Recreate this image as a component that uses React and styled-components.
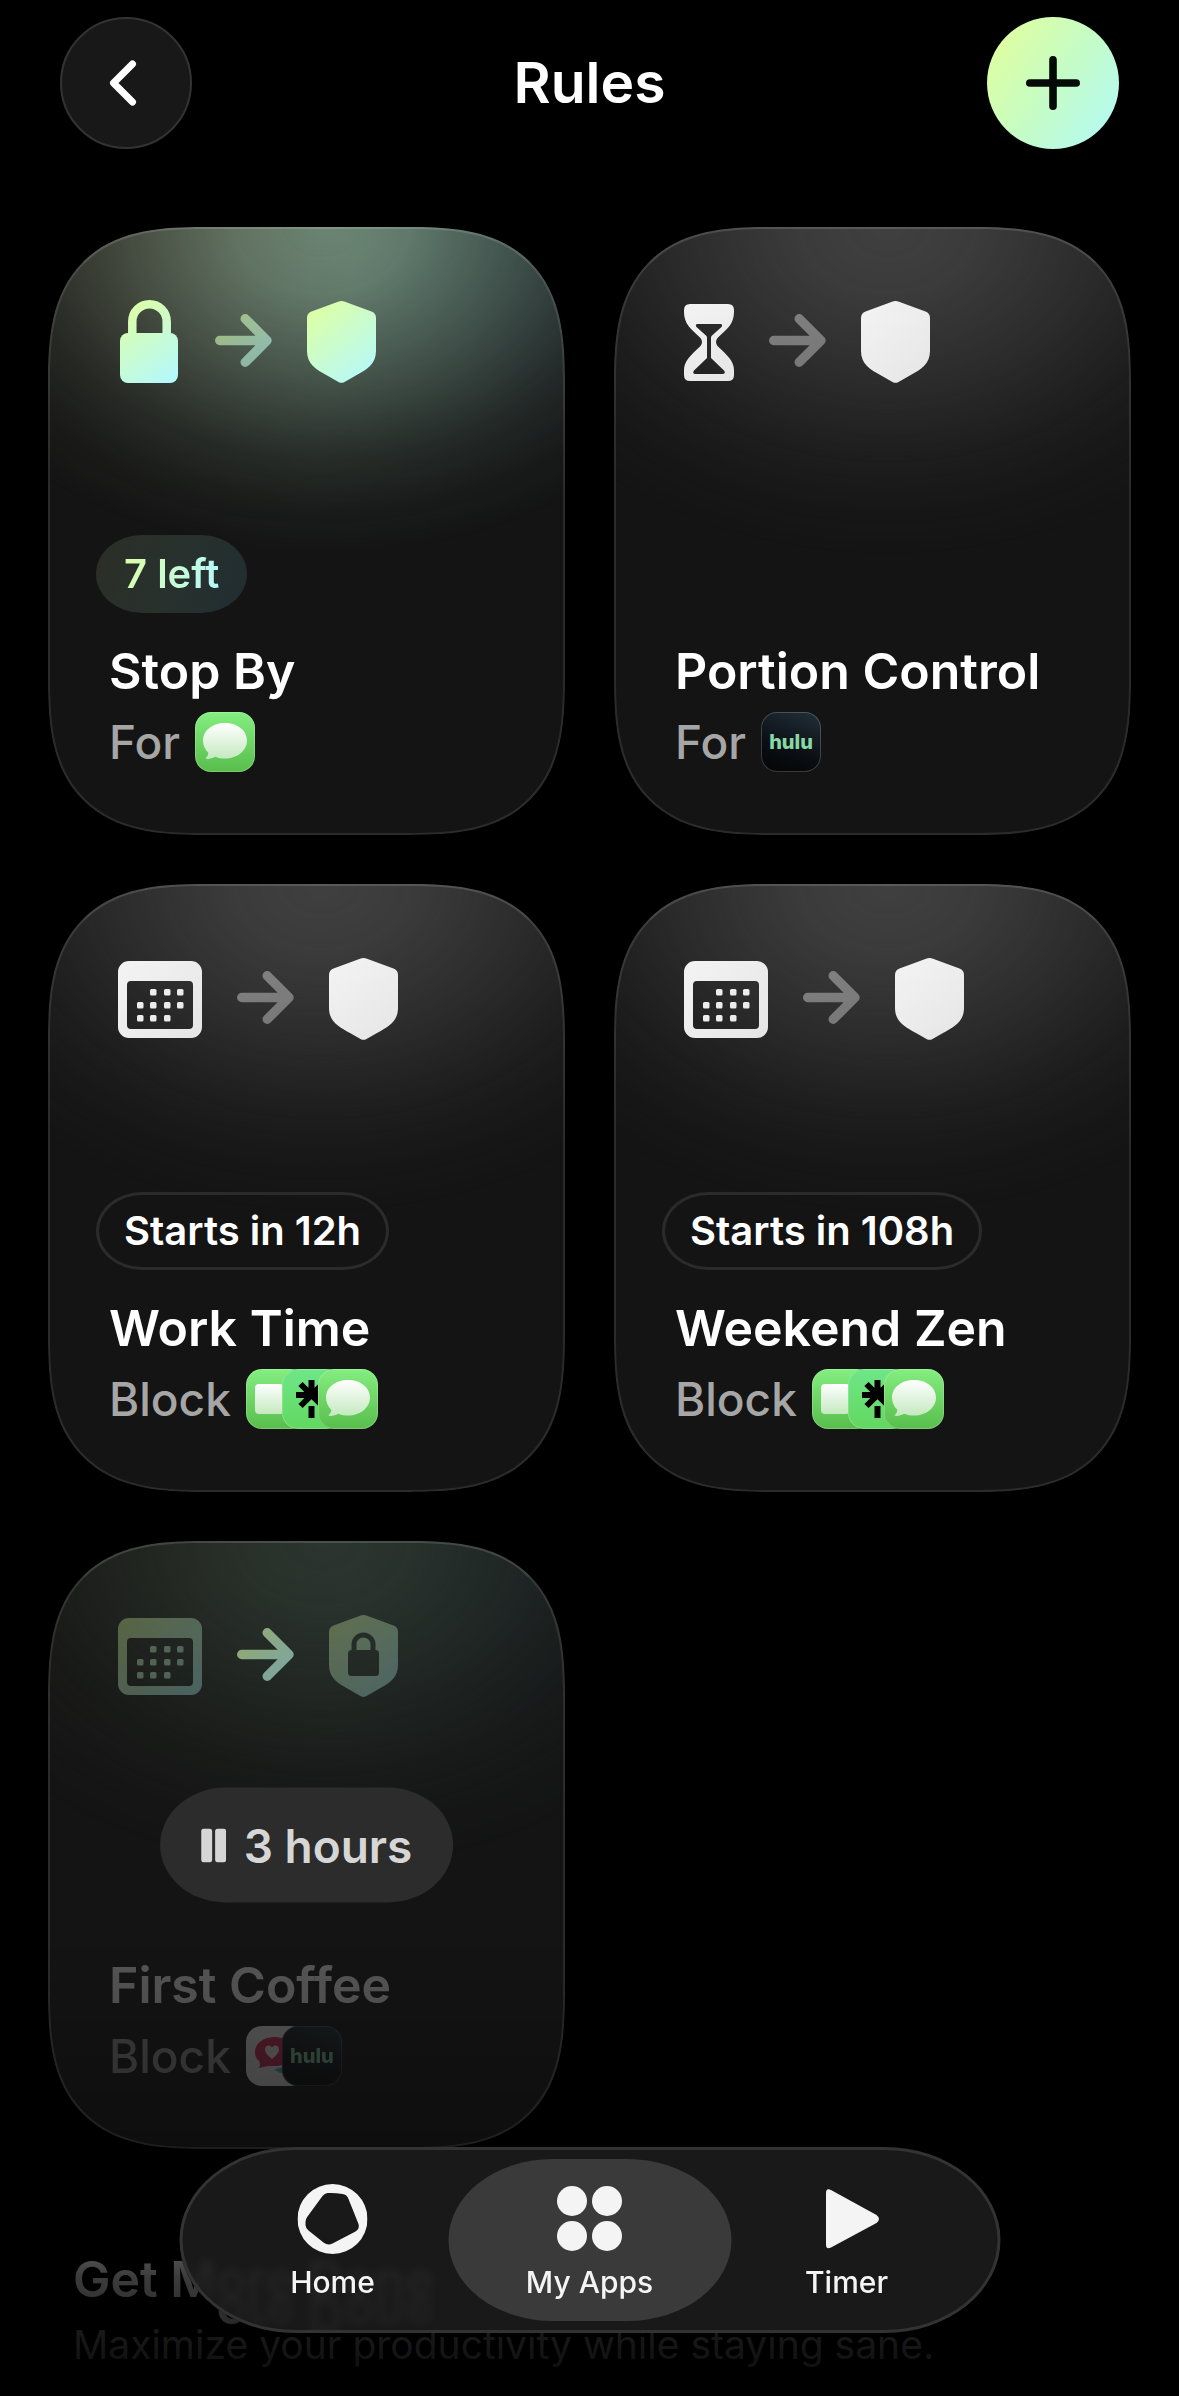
import React, { useId } from 'react'
import styled, { createGlobalStyle, css } from 'styled-components'

const rules = [
  {
    name: 'Stop By',
    action: 'For',
    apps: ['messages'],
    icon: 'lock',
    tone: 'green',
    badge: '7 left',
    active: true,
  },
  {
    name: 'Portion Control',
    action: 'For',
    apps: ['hulu'],
    icon: 'hourglass',
    tone: 'grey',
  },
  {
    name: 'Work Time',
    action: 'Block',
    apps: ['facetime', 'linktree', 'messages'],
    icon: 'calendar',
    tone: 'grey',
    badge: 'Starts in 12h',
  },
  {
    name: 'Weekend Zen',
    action: 'Block',
    apps: ['facetime', 'linktree', 'messages'],
    icon: 'calendar',
    tone: 'grey',
    badge: 'Starts in 108h',
  },
  {
    name: 'First Coffee',
    action: 'Block',
    apps: ['heart', 'hulu'],
    icon: 'calendar',
    tone: 'green',
    paused: '3 hours',
  },
]

const tones = {
  green: ['#dcffa6', '#b4f8ff'],
  grey: ['#f2f2f2', '#e6e6e6'],
}

const SHIELD =
  'M31 .8Q34.500 -.6 38 .8L64.500 10.500Q69 12.300 69 17V50C69 63 60 68.500 48 75L37.500 81Q34.500 82.700 31.500 81L21 75C9 68.500 0 63 0 50V17Q0 12.300 4.500 10.500Z'

function Glyph({ width, height, tone, children }) {
  const id = useId()
  return (
    <svg width={width} height={height} viewBox={`0 0 ${width} ${height}`} aria-hidden="true">
      <defs>
        <linearGradient id={id} gradientUnits="userSpaceOnUse" x1="0" y1="0" x2={width} y2={height}>
          <stop offset="0.1" stopColor={tones[tone][0]} />
          <stop offset="0.95" stopColor={tones[tone][1]} />
        </linearGradient>
      </defs>
      {children(`url(#${id})`)}
    </svg>
  )
}

function LockIcon({ tone }) {
  return (
    <Glyph width={62} height={84} tone={tone}>
      {(fill) => (
        <>
          <path d="M14.300 35V21.500A17.200 17.200 0 0 1 48.700 21.500V35" fill="none" stroke={fill} strokeWidth="8.500" />
          <rect x="2" y="33" width="58" height="50" rx="8" fill={fill} />
        </>
      )}
    </Glyph>
  )
}

function HourglassIcon({ tone }) {
  return (
    <Glyph width={50} height={77} tone={tone}>
      {(fill) => (
        <path
          fill={fill}
          fillRule="evenodd"
          d="M6 0H44Q50 0 50 6V8C50 20 43 25 33.500 34Q30.500 38 33.500 42C43 51 50 57 50 66V71Q50 77 44 77H6Q0 77 0 71V66C0 57 7 51 16.500 42Q19.500 38 16.500 34C7 25 0 20 0 8V6Q0 0 6 0ZM13 20Q11 21 12.500 23L22.500 32Q23 33 23 34V54L10 66.500Q8 69.500 11 70H39Q42 69.500 40 66.500L27 54V34Q27 33 27.500 32L37.500 23Q39 21 37 20Z"
        />
      )}
    </Glyph>
  )
}

const dots = [
  [32, 28], [46, 28], [59, 28],
  [19, 41], [32, 41], [46, 41], [59, 41],
  [19, 54], [32, 54], [46, 54],
]

function CalendarIcon({ tone }) {
  return (
    <Glyph width={84} height={77} tone={tone}>
      {(fill) => (
        <>
          <path
            fill={fill}
            fillRule="evenodd"
            d="M11 0H73A11 11 0 0 1 84 11V66A11 11 0 0 1 73 77H11A11 11 0 0 1 0 66V11A11 11 0 0 1 11 0ZM13 20Q9 20 9 24V64Q9 68 13 68H71Q75 68 75 64V24Q75 20 71 20Z"
          />
          {dots.map(([x, y]) => (
            <rect key={`${x}-${y}`} x={x} y={y} width="6.500" height="6.500" rx="1.500" fill={fill} />
          ))}
        </>
      )}
    </Glyph>
  )
}

function ArrowIcon({ tone }) {
  return (
    <Glyph width={57} height={56} tone={tone}>
      {(fill) => (
        <path
          d="M4.700 26.500H51M30.200 4.700L52 26.500L30.200 48.300"
          fill="none"
          stroke={fill}
          strokeWidth="9.400"
          strokeLinecap="round"
          strokeLinejoin="round"
        />
      )}
    </Glyph>
  )
}

function ShieldIcon({ tone, locked }) {
  const id = useId()
  return (
    <Glyph width={69} height={83} tone={tone}>
      {(fill) => (
        <>
          <mask id={id}>
            <rect width="69" height="83" fill="#fff" />
            {locked && (
              <>
                <rect x="19" y="35" width="31" height="26" rx="3.500" fill="#000" />
                <path d="M25 36V29.500A9.500 9.500 0 0 1 44 29.500V36" fill="none" stroke="#000" strokeWidth="5" />
              </>
            )}
          </mask>
          <path d={SHIELD} fill={fill} mask={`url(#${id})`} />
        </>
      )}
    </Glyph>
  )
}

const ruleIcons = {
  lock: LockIcon,
  hourglass: HourglassIcon,
  calendar: CalendarIcon,
}

function AppArt({ app }) {
  const id = useId()
  if (app === 'hulu') return <HuluName>hulu</HuluName>
  return (
    <svg width="60" height="60" viewBox="0 0 60 60" role="img" aria-label={app}>
      <defs>
        <linearGradient id={id} x1="0" y1="0" x2="0" y2="1">
          <stop offset="0" stopColor="#ffffff" />
          <stop offset="1" stopColor="#c4e9bf" />
        </linearGradient>
      </defs>
      {app === 'messages' && (
        <path
          fill={`url(#${id})`}
          d="M30 11C42.500 11 52 18.500 52 28.500S42.500 46.500 30 46.500C26.500 46.500 23 46 20 44.700C17.500 46.300 14 47.200 11 46.800C10.400 46.700 10.500 46.100 11 45.700C12.700 44.400 13.300 42.500 13.300 40.800C10 37.700 8 33.300 8 28.500C8 18.500 17.500 11 30 11Z"
        />
      )}
      {app === 'facetime' && (
        <path fill={`url(#${id})`} d="M13 15H34Q38 15 38 19V41Q38 45 34 45H13Q9 45 9 41V19Q9 15 13 15ZM40 26L49 19V41L40 34Z" />
      )}
      {app === 'linktree' && (
        <path d="M29.500 11V27M14 26H45M18.500 15L29.500 26L18.500 37M40.500 15L29.500 26L40.500 37M29.500 37V49" fill="none" stroke="#000" strokeWidth="6" />
      )}
      {app === 'heart' && (
        <>
          <path fill="#5fb9c9" d="M28 44Q34 40 44 42L42 47H34Q31 45 28 44Z" />
          <path fill="#e0305f" d="M29 11C39 11 46 17 46 26S40 40 30 40H22Q17 41 13 42Q15 38 13 35Q9 32 9 26C9 17 18 11 29 11Z" />
          <path fill="#fff" d="M26 33C21 29 19 26 19 23.500C19 19 24 18 26 21.500C28 18 33 19 33 23.500C33 26 31 29 26 33Z" />
        </>
      )}
    </svg>
  )
}

function RuleCard({ rule }) {
  const Icon = ruleIcons[rule.icon]
  const dimmed = Boolean(rule.paused)

  return (
    <Card $glow={rule.active ? 'active' : rule.paused ? 'paused' : 'idle'}>
      <Flow>
        <Dim $on={dimmed}>
          <Icon tone={rule.tone} />
        </Dim>
        <Faint $tone={rule.tone}>
          <ArrowIcon tone={rule.tone} />
        </Faint>
        <Dim $on={dimmed}>
          <ShieldIcon tone={rule.tone} locked={dimmed} />
        </Dim>
      </Flow>

      {rule.paused && (
        <Paused type="button">
          <svg width="25" height="34" viewBox="0 0 25 34" aria-hidden="true">
            <rect width="11" height="34" rx="3" fill="currentColor" />
            <rect x="14" width="11" height="34" rx="3" fill="currentColor" />
          </svg>
          {rule.paused}
        </Paused>
      )}

      <Details $dimmed={dimmed}>
        {rule.badge && (
          <Badge $active={rule.active}>
            <span>{rule.badge}</span>
          </Badge>
        )}
        <Name>{rule.name}</Name>
        <Target>
          {rule.action}
          <Apps>
            {rule.apps.map((app) => (
              <AppTile key={app} $app={app}>
                <AppArt app={app} />
              </AppTile>
            ))}
          </Apps>
        </Target>
      </Details>
    </Card>
  )
}

function App() {
  return (
    <Page>
      <GlobalStyle />
      <Header>
        <BackButton type="button" aria-label="Back">
          <svg width="28" height="46" viewBox="0 0 28 46" aria-hidden="true">
            <path d="M23.500 4L4.500 23L23.500 42" fill="none" stroke="currentColor" strokeWidth="7" strokeLinecap="round" strokeLinejoin="round" />
          </svg>
        </BackButton>
        <Title>Rules</Title>
        <AddButton type="button" aria-label="Add rule">
          <svg width="54" height="54" viewBox="0 0 54 54" aria-hidden="true">
            <path d="M27 3.800V50.200M3.800 27H50.200" fill="none" stroke="currentColor" strokeWidth="7.600" strokeLinecap="round" />
          </svg>
        </AddButton>
      </Header>

      <Grid>
        {rules.map((rule) => (
          <RuleCard key={rule.name} rule={rule} />
        ))}
      </Grid>

      <Section>
        <SectionTitle>
          Get M<Refracted>ore Done</Refracted>
        </SectionTitle>
        <SectionText>Maximize your productivity while staying sane.</SectionText>
      </Section>

      <Fade />
      <TabBar>
        <Tab href="#home">
          <svg width="70" height="70" viewBox="0 0 70 70" aria-hidden="true">
            <path
              fill="currentColor"
              fillRule="evenodd"
              d="M35 0A35 35 0 1 1 35 70A35 35 0 1 1 35 0ZM30 9Q27 9.500 25 12L10 32.500Q8 35 8 38V41Q8 44 11 46.500L26 58.500Q30.500 62 35 59.500L58 47.500Q62.500 44.500 61 40L51 15Q49.500 10.500 45 10Q37 8.500 30 9Z"
            />
          </svg>
          Home
        </Tab>
        <Tab href="#apps" $current aria-current="page">
          <svg width="70" height="70" viewBox="0 0 70 70" aria-hidden="true">
            <g fill="currentColor">
              <circle cx="17.500" cy="17" r="15" />
              <circle cx="52.500" cy="17" r="15" />
              <circle cx="17.500" cy="52" r="15" />
              <circle cx="52.500" cy="52" r="15" />
            </g>
          </svg>
          My Apps
        </Tab>
        <Tab href="#timer">
          <svg width="70" height="70" viewBox="0 0 70 70" aria-hidden="true">
            <path fill="currentColor" d="M14.500 9Q14.500 3.500 19.500 6L65 31Q70 35 65 39L19.500 63.500Q14.500 66 14.500 60.500Z" />
          </svg>
          Timer
        </Tab>
      </TabBar>
    </Page>
  )
}

const GlobalStyle = createGlobalStyle`
  * {
    box-sizing: border-box;
  }

  body {
    margin: 0;
    background: #000;
    color: #fff;
    font-family: Inter, "Liberation Sans", sans-serif;
  }

  svg {
    display: block;
    flex: none;
  }

  h1, h2, p {
    margin: 0;
  }
`

const Page = styled.div`
  min-height: 100vh;
`

const Header = styled.header`
  display: flex;
  align-items: center;
  justify-content: space-between;
  padding: 17px 60px;
`

const Title = styled.h1`
  font-size: 57px;
  line-height: 64px;
  font-weight: 600;
`

const RoundButton = styled.button`
  display: grid;
  place-items: center;
  width: 132px;
  height: 132px;
  padding: 0;
  border: 0;
  border-radius: 50%;
  cursor: pointer;
`

const BackButton = styled(RoundButton)`
  background: #181818;
  border: 2px solid #333;
  color: #fff;
  padding-right: 6px;
`

const AddButton = styled(RoundButton)`
  background: linear-gradient(125deg, #e2ff9c 5%, #c6fcc4 50%, #b0fafc 100%);
  color: #040a06;
`

const Grid = styled.main`
  display: grid;
  grid-template-columns: 1fr 1fr;
  gap: 49px;
  padding: 61px 48px 0;
`

const glows = {
  active: 'linear-gradient(100deg, #68725e 10%, #6c8776 50%, #5c7a74 85%)',
  idle: 'linear-gradient(#404040, #404040)',
  paused: 'linear-gradient(100deg, #2a3028 10%, #2c3630 50%, #263331 85%)',
}

const smoothCorner = css`
  border-radius: 120px;

  @supports (corner-shape: superellipse(1.45)) {
    border-radius: 156px;
    corner-shape: superellipse(1.45);
  }
`

const Card = styled.article`
  ${smoothCorner}
  position: relative;
  isolation: isolate;
  overflow: hidden;
  display: flex;
  flex-direction: column;
  min-height: 608px;
  padding: 73px 48px 63px;
  background: #141414;

  &::before {
    content: "";
    position: absolute;
    inset: 0;
    z-index: -1;
    background: ${({ $glow }) => glows[$glow]};
    mask-image: radial-gradient(
      ellipse 84% 54% at 53% 0,
      #000 0%,
      rgba(0, 0, 0, .9) 20%,
      rgba(0, 0, 0, .58) 45%,
      rgba(0, 0, 0, .22) 70%,
      rgba(0, 0, 0, .07) 86%,
      transparent 100%
    );
  }

  &::after {
    content: "";
    ${smoothCorner}
    position: absolute;
    inset: 0;
    border: 2px solid rgba(255, 255, 255, .1);
    border-top-color: rgba(255, 255, 255, .14);
    pointer-events: none;
  }
`

const Flow = styled.div`
  display: flex;
  align-items: center;
  gap: 35px;
  height: 84px;
  padding-left: 22px;
`

const Dim = styled.div`
  opacity: ${({ $on }) => ($on ? 0.3 : 1)};
`

const Faint = styled.div`
  opacity: ${({ $tone }) => ($tone === 'green' ? 0.6 : 0.4)};
`

const Details = styled.div`
  display: flex;
  flex-direction: column;
  align-items: flex-start;
  margin-top: auto;
  opacity: ${({ $dimmed }) => ($dimmed ? 0.28 : 1)};
`

const Badge = styled.div`
  height: 78px;
  display: flex;
  align-items: center;
  margin-bottom: 28px;
  padding: 0 25px;
  border: 3px solid #2b2b2b;
  border-radius: 46px / 39px;
  font-size: 40px;
  line-height: 44px;
  font-weight: 600;

  ${({ $active }) =>
    $active &&
    css`
      border-color: transparent;
      background: linear-gradient(110deg, #2b2e26, #28312d 50%, #202d31) border-box;

      span {
        background: linear-gradient(110deg, #dcffa6, #b4f8ff);
        background-clip: text;
        color: transparent;
      }
    `}
`

const Name = styled.h2`
  padding-left: 13px;
  font-size: 50px;
  line-height: 60px;
  font-weight: 600;
`

const Target = styled.div`
  display: flex;
  align-items: center;
  gap: 15px;
  margin-top: 11px;
  padding-left: 13px;
  color: #a6a6a6;
  font-size: 46px;
  line-height: 60px;
  font-weight: 500;
`

const Apps = styled.div`
  display: flex;
`

const tiles = {
  messages: 'linear-gradient(#84ee80, #58bd4c)',
  facetime: 'linear-gradient(#84ee80, #58bd4c)',
  linktree: 'linear-gradient(#6fe688, #62d860)',
  hulu: 'linear-gradient(200deg, #22303a, #0b0f13 60%, #030405)',
  heart: '#fff',
}

const AppTile = styled.div`
  display: grid;
  place-items: center;
  width: 60px;
  height: 60px;
  overflow: hidden;
  border-radius: 16px;
  background: ${({ $app }) => tiles[$app]};
  box-shadow: inset 0 0 0 1px rgba(255, 255, 255, .2);

  & + & {
    margin-left: -24px;
  }
`

const HuluName = styled.span`
  color: #86d9a6;
  font-size: 20px;
  line-height: 24px;
  font-weight: 800;
`

// sits over the middle of a snoozed card
const Paused = styled.button`
  position: absolute;
  top: 50%;
  left: 50%;
  transform: translate(-50%, -50%);
  display: flex;
  align-items: center;
  gap: 18px;
  height: 115px;
  padding: 0 41px;
  border: 0;
  border-radius: 66px / 58px;
  background: #2c2c2c;
  color: #d6d6d6;
  font-family: inherit;
  font-size: 46px;
  line-height: 56px;
  font-weight: 600;
  white-space: nowrap;
  cursor: pointer;
`

const Section = styled.section`
  padding: 100px 73px 27px;
`

const SectionTitle = styled.h2`
  font-size: 50px;
  line-height: 60px;
  font-weight: 600;
`

const Refracted = styled.span`
  display: inline-block;
  -webkit-box-reflect: below -24px;
`

const SectionText = styled.p`
  margin-top: 12px;
  color: #a6a6a6;
  font-size: 39px;
  line-height: 48px;
`

const Fade = styled.div`
  position: fixed;
  left: 0;
  right: 0;
  bottom: 0;
  height: 450px;
  background: linear-gradient(
    transparent,
    rgba(0, 0, 0, .25) 41%,
    rgba(0, 0, 0, .77) 74%,
    rgba(0, 0, 0, .87) 89%,
    rgba(0, 0, 0, .95)
  );
  pointer-events: none;
`

const TabBar = styled.nav`
  position: fixed;
  left: 50%;
  bottom: 63px;
  transform: translateX(-50%);
  display: flex;
  padding: 9px;
  border: 3px solid #333;
  border-radius: 116px / 93px;
  background: rgba(30, 30, 30, .82);
  backdrop-filter: blur(4px);
`

const Tab = styled.a`
  display: flex;
  flex-direction: column;
  align-items: center;
  gap: 8px;
  width: 283px;
  padding: 25px 0 19px;
  border-radius: 104px / 81px;
  background: ${({ $current }) => ($current ? '#3a3a3a' : 'transparent')};
  color: #f4f4f4;
  font-size: 30px;
  line-height: 40px;
  font-weight: 500;
  text-decoration: none;

  & + & {
    margin-left: -26px;
  }
`

export default App
